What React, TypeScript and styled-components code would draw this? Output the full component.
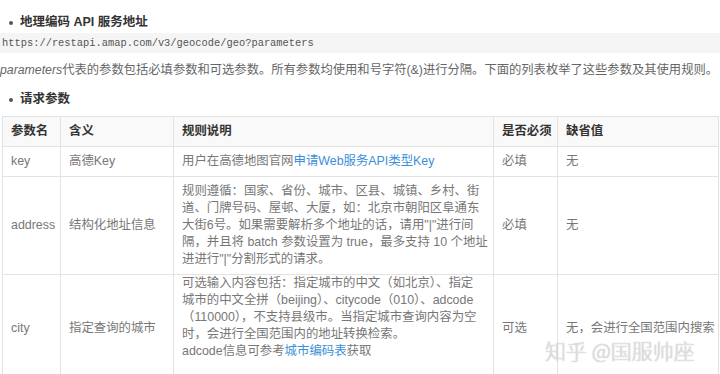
import React from "react";
import styled, { createGlobalStyle } from "styled-components";

const GlobalStyle = createGlobalStyle`
  html, body {
    margin: 0;
    padding: 0;
    background: #ffffff;
  }
  body {
    font-family: "Liberation Sans", "Noto Sans CJK SC", sans-serif;
    color: #666;
    overflow: hidden;
  }
`;

const Page = styled.div`
  width: 720px;
  padding-top: 14px;
  box-sizing: border-box;
`;

const Heading = styled.div<{ $mt?: number }>`
  display: flex;
  align-items: center;
  gap: 7px;
  padding-left: 9px;
  margin-top: ${(p) => p.$mt ?? 0}px;
  height: 17px;
  font-size: 12.5px;
  font-weight: bold;
  color: #333;
  line-height: 17px;
`;

const Bullet = styled.span`
  width: 4px;
  height: 4px;
  border-radius: 50%;
  background: #555;
  flex: none;
`;

const Code = styled.pre`
  margin: 2px 0 0 0;
  padding: 0 0 0 2px;
  height: 20px;
  line-height: 20px;
  background: #f5f5f5;
  font-family: "Liberation Mono", monospace;
  font-size: 10.4px;
  color: #555;
`;

const Para = styled.p`
  margin: 9px 0 0 0;
  font-size: 12.3px;
  line-height: 17px;
  color: #666;
  white-space: nowrap;
`;

const Em = styled.em`
  font-style: italic;
`;

const Table = styled.table`
  margin: 8px 0 0 2px;
  width: 716px;
  border-collapse: collapse;
  table-layout: fixed;
  font-size: 12.4px;
  line-height: 17px;
`;

const Col = styled.col<{ $w: number }>`
  width: ${(p) => p.$w}px;
`;

const Th = styled.th`
  border: 1px solid #e3e3e3;
  background: #f9f9f9;
  padding: 6px 8px;
  text-align: left;
  font-weight: bold;
  color: #333;
  vertical-align: middle;
  white-space: nowrap;
  overflow: visible;
`;

const Td = styled.td<{ $top?: boolean }>`
  border: 1px solid #e3e3e3;
  padding: ${(p) => (p.$top ? "0 8px 21px 8px" : "6px 8px")};
  color: #777;
  vertical-align: middle;
  white-space: nowrap;
`;

const Line = styled.span`
  display: block;
  white-space: nowrap;
`;

const Link = styled.a`
  color: #3b8fd9;
  text-decoration: none;
`;

const Watermark = styled.div`
  position: absolute;
  left: 545px;
  top: 337px;
  font-family: "Noto Sans CJK SC", sans-serif;
  font-size: 21px;
  font-weight: 300;
  line-height: 26px;
  color: rgba(232, 232, 232, 0.9);
  text-shadow: 0 0 1px rgba(110, 110, 110, 0.65);
  white-space: nowrap;
  pointer-events: none;
`;

export default function App() {
  return (
    <>
      <GlobalStyle />
      <Page>
        <Heading>
          <Bullet />
          地理编码 API 服务地址
        </Heading>
        <Code>https://restapi.amap.com/v3/geocode/geo?parameters</Code>
        <Para>
          <Em>parameters</Em>
          代表的参数包括必填参数和可选参数。所有参数均使用和号字符(&amp;)进行分隔。下面的列表枚举了这些参数及其使用规则。
        </Para>
        <Heading $mt={12}>
          <Bullet />
          请求参数
        </Heading>
        <Table>
          <colgroup>
            <Col $w={58} />
            <Col $w={113} />
            <Col $w={320} />
            <Col $w={64} />
            <Col $w={161} />
          </colgroup>
          <thead>
            <tr>
              <Th>参数名</Th>
              <Th>含义</Th>
              <Th>规则说明</Th>
              <Th>是否必须</Th>
              <Th>缺省值</Th>
            </tr>
          </thead>
          <tbody>
            <tr>
              <Td>key</Td>
              <Td>高德Key</Td>
              <Td>
                用户在高德地图官网<Link href="#">申请Web服务API类型Key</Link>
              </Td>
              <Td>必填</Td>
              <Td>无</Td>
            </tr>
            <tr>
              <Td>address</Td>
              <Td>结构化地址信息</Td>
              <Td>
                <Line>规则遵循：国家、省份、城市、区县、城镇、乡村、街</Line>
                <Line>道、门牌号码、屋邨、大厦，如：北京市朝阳区阜通东</Line>
                <Line>大街6号。如果需要解析多个地址的话，请用"|"进行间</Line>
                <Line>隔，并且将 batch 参数设置为 true，最多支持 10 个地址</Line>
                <Line>进进行"|"分割形式的请求。</Line>
              </Td>
              <Td>必填</Td>
              <Td>无</Td>
            </tr>
            <tr>
              <Td>city</Td>
              <Td>指定查询的城市</Td>
              <Td $top>
                <Line>可选输入内容包括：指定城市的中文（如北京）、指定</Line>
                <Line>城市的中文全拼（beijing）、citycode（010）、adcode</Line>
                <Line>（110000），不支持县级市。当指定城市查询内容为空</Line>
                <Line>时，会进行全国范围内的地址转换检索。</Line>
                <Line>
                  adcode信息可参考<Link href="#">城市编码表</Link>获取
                </Line>
              </Td>
              <Td>可选</Td>
              <Td>无，会进行全国范围内搜索</Td>
            </tr>
          </tbody>
        </Table>
      </Page>
      <Watermark>知乎 @国服帅座</Watermark>
    </>
  );
}
